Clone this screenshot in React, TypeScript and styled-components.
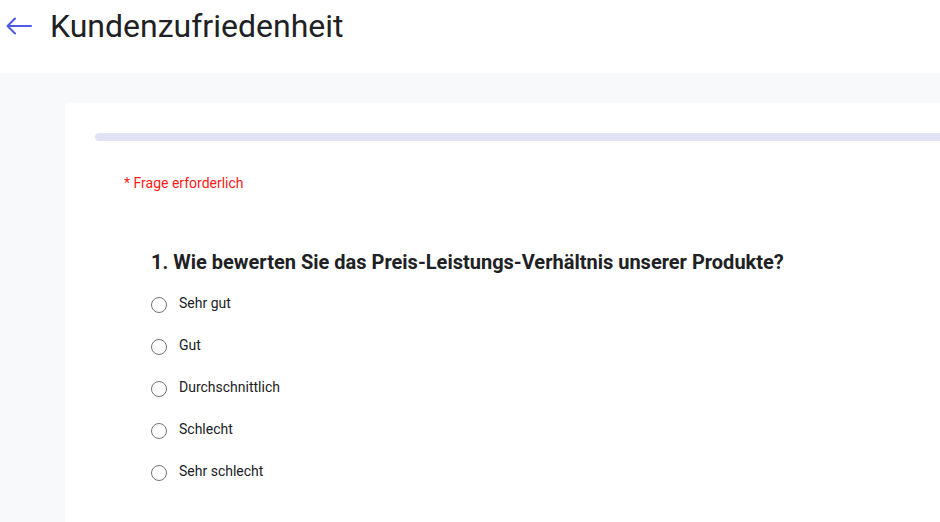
import React from "react";
import styled, { createGlobalStyle } from "styled-components";

const Global = createGlobalStyle`
  html, body { margin: 0; padding: 0; }
  body {
    font-family: Roboto, "Noto Sans", Arial, sans-serif;
    background: #ffffff;
    color: #202124;
    overflow: hidden;
    width: 940px;
    height: 522px;
  }
`;

const Page = styled.div`
  display: flex;
  flex-direction: column;
  width: 940px;
  height: 522px;
  overflow: hidden;
`;

const Header = styled.header`
  display: flex;
  align-items: center;
  height: 73px;
  padding: 0 0 22px 6px;
  box-sizing: border-box;
  gap: 18px;
  background: #ffffff;
`;

const BackButton = styled.button`
  display: flex;
  align-items: center;
  justify-content: center;
  width: 26px;
  height: 26px;
  padding: 0;
  border: none;
  background: transparent;
  color: #4d5ae6;
  cursor: pointer;
`;

const Title = styled.h1`
  margin: 0;
  font-size: 32px;
  font-weight: 400;
  color: #202124;
  letter-spacing: 0;
`;

const Body = styled.main`
  flex: 1;
  background: #f8f9fa;
  padding: 30px 0 0 65px;
`;

const Card = styled.section`
  width: 1000px;
  height: 100%;
  background: #ffffff;
  border-radius: 4px 0 0 0;
  padding: 30px 0 0 30px;
  box-sizing: border-box;
`;

const Progress = styled.div`
  height: 8px;
  background: #e2e2f7;
  border-radius: 4px 0 0 4px;
`;

const Required = styled.p`
  margin: 34px 0 0 29px;
  font-size: 14px;
  color: #ff1a1a;
  line-height: 16px;
`;

const Question = styled.fieldset`
  border: none;
  margin: 59px 0 0 56px;
  padding: 0;
`;

const QuestionTitle = styled.legend`
  padding: 0;
  font-size: 20px;
  font-weight: 700;
  color: #202124;
  line-height: 24px;
`;

const Options = styled.div`
  display: flex;
  flex-direction: column;
  gap: 20px;
  margin-top: 20px;
`;

const Option = styled.label`
  display: flex;
  align-items: flex-start;
  height: 22px;
  gap: 12px;
  font-size: 14px;
  line-height: 22px;
  color: #202124;
  cursor: pointer;
`;

const Radio = styled.span`
  width: 16px;
  height: 16px;
  margin-top: 3px;
  border: 1px solid #757575;
  border-radius: 50%;
  box-sizing: border-box;
  flex: none;
`;

const OptionText = styled.span`
  margin-top: -2px;
`;

const options = ["Sehr gut", "Gut", "Durchschnittlich", "Schlecht", "Sehr schlecht"];

export default function App() {
  return (
    <>
      <Global />
      <Page>
        <Header>
          <BackButton aria-label="Zurück">
            <svg width="26" height="26" viewBox="0 0 26 26" fill="none" stroke="currentColor" strokeWidth="2" strokeLinecap="round" strokeLinejoin="round">
              <path d="M25 13H2" />
              <path d="M9 5.5L1.5 13L9 20.5" />
            </svg>
          </BackButton>
          <Title>Kundenzufriedenheit</Title>
        </Header>
        <Body>
          <Card>
            <Progress />
            <Required>* Frage erforderlich</Required>
            <Question>
              <QuestionTitle>1. Wie bewerten Sie das Preis-Leistungs-Verhältnis unserer Produkte?</QuestionTitle>
              <Options>
                {options.map((o) => (
                  <Option key={o}>
                    <Radio />
                    <OptionText>{o}</OptionText>
                  </Option>
                ))}
              </Options>
            </Question>
          </Card>
        </Body>
      </Page>
    </>
  );
}
